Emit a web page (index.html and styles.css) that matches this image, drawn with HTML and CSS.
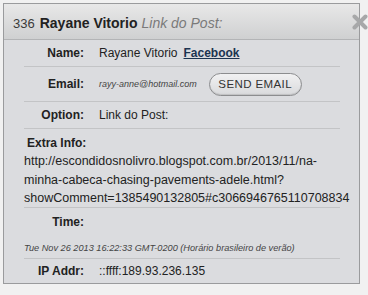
FILE: index.html
```html
<!DOCTYPE html>
<html>
<head>
<meta charset="utf-8">
<link rel="stylesheet" href="styles.css">
</head>
<body>
<div class="panel">
  <div class="header">
    <span class="num">336</span>
    <span class="hname">Rayane Vitorio</span>
    <span class="hsub">Link do Post:</span>
  </div>
  <svg class="close" width="16" height="16" viewBox="0 0 16 16"><path d="M2.5 2.5 L13.5 13.5 M13.5 2.5 L2.5 13.5" stroke="#a7a8a9" stroke-width="4" stroke-linecap="round"/></svg>
  <div class="body">
    <div class="row row-name">
      <div class="label">Name:</div>
      <div class="value">Rayane Vitorio <a class="fb">Facebook</a></div>
    </div>
    <div class="row row-email">
      <div class="label">Email:</div>
      <div class="value"><span class="email">rayy-anne@hotmail.com</span><span class="btn">SEND EMAIL</span></div>
    </div>
    <div class="row">
      <div class="label">Option:</div>
      <div class="value">Link do Post:</div>
    </div>
    <div class="block">
      <div class="blabel extra">Extra Info:</div>
      <div class="url"><span>http://escondidosnolivro.blogspot.com.br/2013/11/na-</span><span>minha-cabeca-chasing-pavements-adele.html?</span><span>showComment=1385490132805#c3066946765110708834</span></div>
    </div>
    <div class="block block-time">
      <div class="row-inline"><div class="label">Time:</div></div>
      <div class="time">Tue Nov 26 2013 16:22:33 GMT-0200 (Horário brasileiro de verão)</div>
    </div>
    <div class="row last">
      <div class="label">IP Addr:</div>
      <div class="value">::ffff:189.93.236.135</div>
    </div>
  </div>
</div>
</body>
</html>
```
FILE: styles.css
```css
html, body {
  margin: 0;
  padding: 0;
}
body {
  background: #f1f1f1;
  font-family: "Liberation Sans", Arial, sans-serif;
  width: 368px;
  height: 295px;
  overflow: hidden;
  padding: 3px 0 0 3px;
  box-sizing: border-box;
}
.panel {
  position: relative;
  width: 357px;
  height: 281px;
  box-sizing: border-box;
  border: 1px solid #9a9b9d;
  background: #dbdcdf;
}
.header {
  height: 36px;
  box-sizing: border-box;
  border-bottom: 1px solid #b3b4b6;
  background: linear-gradient(#e8e8e8, #cfd0d1);
  display: flex;
  align-items: center;
  padding-left: 9px;
  padding-top: 3px;
  gap: 5px;
}
.num {
  font-size: 13px;
  color: #3a3a3a;
}
.hname {
  font-size: 14px;
  font-weight: bold;
  color: #222;
}
.hsub {
  font-size: 14px;
  font-style: italic;
  color: #7a7a7a;
  margin-left: -1px;
}
.close {
  position: absolute;
  left: 348px;
  top: 10px;
}
.body {
  padding: 0 19px 0 20px;
}
.row {
  display: flex;
  align-items: center;
  height: 27px;
  border-bottom: 1px solid #c3c4c6;
  box-sizing: border-box;
}
.row-email { height: 35px; }
.row.last { border-bottom: none; height: 24px; }
.label {
  width: 60px;
  text-align: right;
  font-size: 12px;
  font-weight: bold;
  color: #222;
  flex: none;
}
.value {
  margin-left: 15px;
  font-size: 12px;
  color: #222;
  display: flex;
  align-items: center;
}
.fb {
  margin-left: 6px;
  font-weight: bold;
  color: #1c3450;
  text-decoration: underline;
}
.email {
  font-size: 9px;
  font-style: italic;
  color: #444;
}
.btn {
  margin-left: 12px;
  width: 93px;
  height: 23px;
  box-sizing: border-box;
  border: 1px solid #8c8d8f;
  border-radius: 12px;
  background: linear-gradient(#f1f1f2, #d9dadc);
  box-shadow: inset 0 -1px 1px rgba(0,0,0,0.12);
  font-size: 11.5px;
  letter-spacing: 0.4px;
  color: #333;
  display: flex;
  align-items: center;
  justify-content: center;
}
.block {
  border-bottom: 1px solid #c3c4c6;
  height: 79px;
  box-sizing: border-box;
  padding-top: 7px;
}
.blabel {
  font-size: 12px;
  font-weight: bold;
  color: #222;
}
.extra { padding-left: 3px; line-height: 15px; }
.url {
  font-size: 12.5px;
  line-height: 18.5px;
  color: #222;
  margin-top: 1px;
  white-space: nowrap;
  display: flex;
  flex-direction: column;
}
.block-time {
  height: 51px;
  padding-top: 7px;
}
.row-inline .label { line-height: 15px; }
.time {
  font-size: 9.2px;
  font-style: italic;
  color: #444;
  margin-top: 13px;
}
```
